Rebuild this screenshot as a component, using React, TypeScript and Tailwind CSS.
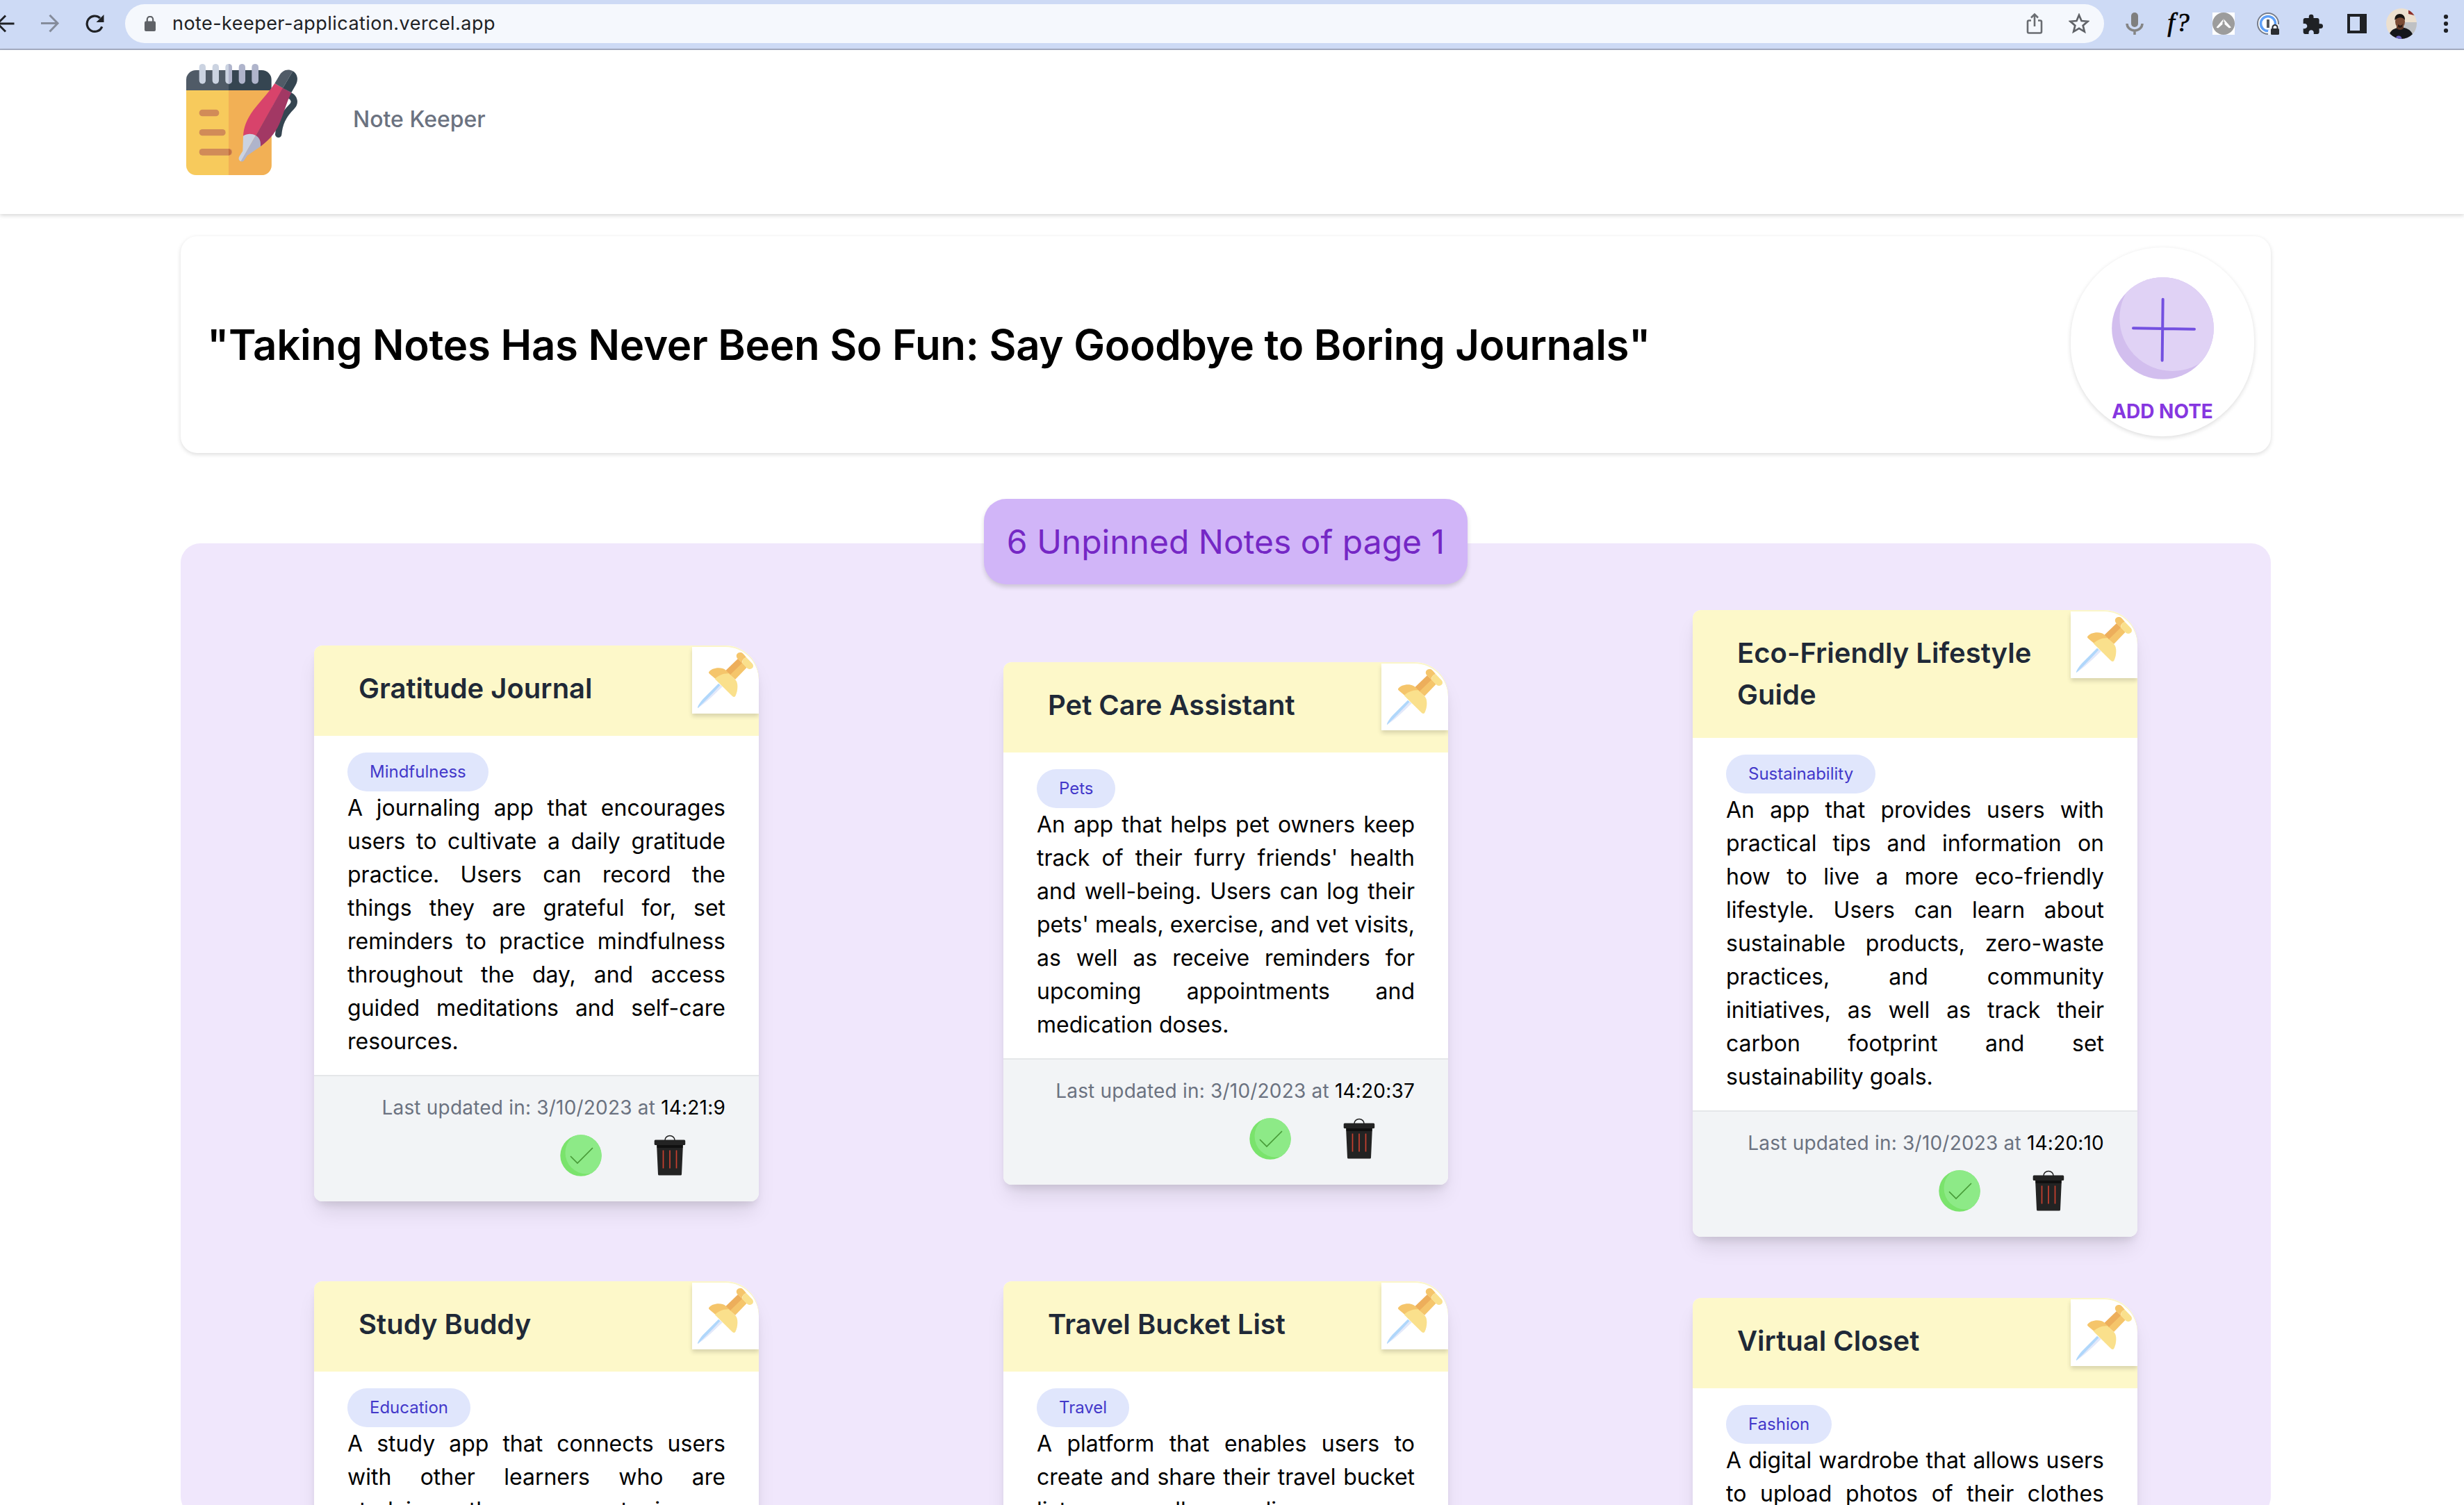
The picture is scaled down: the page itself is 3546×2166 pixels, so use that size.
import React from "react";

type Note = {
  title: string;
  tag: string;
  text: string;
  time: string;
};

const notes: Note[] = [
  {
    title: "Gratitude Journal",
    tag: "Mindfulness",
    text: "A journaling app that encourages users to cultivate a daily gratitude practice. Users can record the things they are grateful for, set reminders to practice mindfulness throughout the day, and access guided meditations and self-care resources.",
    time: "14:21:9",
  },
  {
    title: "Pet Care Assistant",
    tag: "Pets",
    text: "An app that helps pet owners keep track of their furry friends' health and well-being. Users can log their pets' meals, exercise, and vet visits, as well as receive reminders for upcoming appointments and medication doses.",
    time: "14:20:37",
  },
  {
    title: "Eco-Friendly Lifestyle Guide",
    tag: "Sustainability",
    text: "An app that provides users with practical tips and information on how to live a more eco-friendly lifestyle. Users can learn about sustainable products, zero-waste practices, and community initiatives, as well as track their carbon footprint and set sustainability goals.",
    time: "14:20:10",
  },
  {
    title: "Study Buddy",
    tag: "Education",
    text: "A study app that connects users with other learners who are studying the same topic or coursework. Users can create study groups, share notes and resources, and schedule study sessions together. The app also helps learners keep track of exams.",
    time: "14:19:42",
  },
  {
    title: "Travel Bucket List",
    tag: "Travel",
    text: "A platform that enables users to create and share their travel bucket list, as well as discover new destinations and activities. Users can plan trips together, save places to visit, and share photos and tips from their journeys with other travelers.",
    time: "14:19:15",
  },
  {
    title: "Virtual Closet",
    tag: "Fashion",
    text: "A digital wardrobe that allows users to upload photos of their clothes and create outfits. Users can plan what to wear, receive suggestions based on weather and occasion, and share looks with their friends and family.",
    time: "14:18:50",
  },
];

function ToolButton({ children }: { children: React.ReactNode }) {
  return <div className="flex h-[68px] w-16 shrink-0 items-center justify-center">{children}</div>;
}

function BrowserBar() {
  return (
    <div className="flex h-[72px] items-start overflow-hidden border-b-2 border-[#a7afc4] bg-[#cddaf5]">
      <div className="-ml-6 flex shrink-0">
        <ToolButton>
          <svg width="28" height="28" viewBox="0 0 28 28" fill="none" stroke="#1f2125" strokeWidth="3">
            <path d="M26.5 14H3M14 2.5L2.5 14L14 25.5" />
          </svg>
        </ToolButton>
        <ToolButton>
          <svg width="28" height="28" viewBox="0 0 28 28" fill="none" stroke="#858c9b" strokeWidth="3">
            <path d="M1 13.500H25M13.500 1.800L25 13.500L13.500 25.500" />
          </svg>
        </ToolButton>
        <ToolButton>
          <svg width="28" height="28" viewBox="0 0 28 28">
            <path d="M24.800 18.300A11.200 11.200 0 1 1 22 6" fill="none" stroke="#1f2125" strokeWidth="3.200" />
            <path d="M27.500 1V12H16.500Z" fill="#1f2125" />
          </svg>
        </ToolButton>
      </div>
      <div className="mt-1.5 ml-3 flex h-14 w-[2848px] shrink-0 items-center rounded-full bg-[#f5f8fd] pr-5 pl-7">
        <svg width="16" height="22" viewBox="0 0 16 22" className="shrink-0">
          <path d="M3.800 9V5A4.200 4.200 0 0 1 12.200 5V9" fill="none" stroke="#5f6267" strokeWidth="2.200" />
          <rect y="7.500" width="16" height="14.500" rx="2" fill="#5f6267" />
        </svg>
        <span className="ml-6 text-[27px] tracking-[0.45px] text-[#202124]">note-keeper-application.vercel.app</span>
        <div className="ml-auto flex items-center">
          <svg width="24" height="32" viewBox="0 0 24 32" fill="none" stroke="#6a6d72" strokeWidth="2.600">
            <path d="M7 11.500H4A2 2 0 0 0 2 13.500V27.500A2 2 0 0 0 4 29.500H20A2 2 0 0 0 22 27.500V13.500A2 2 0 0 0 20 11.500H17" />
            <path d="M12 20V3M7 7.500L12 2.500L17 7.500" />
          </svg>
          <svg width="30" height="30" viewBox="1 1 28 28" className="mr-px ml-[37px]" fill="none" stroke="#5f6267" strokeWidth="2.500">
            <path d="M15 3.500L18.300 11.300L26.700 12L20.300 17.500L22.300 25.800L15 21.400L7.700 25.800L9.700 17.500L3.300 12L11.700 11.300Z" />
          </svg>
        </div>
      </div>
      <div className="ml-3 flex shrink-0">
        <ToolButton>
          <svg width="26" height="32" viewBox="0 0 26 32">
            <rect x="8" y="0" width="10" height="21" rx="5" fill="#7f7f7f" />
            <path d="M2 16A11 10 0 0 0 24 16M13 26V32" fill="none" stroke="#858585" strokeWidth="3.500" />
          </svg>
        </ToolButton>
        <ToolButton>
          <span className="-mt-1 font-['Liberation_Serif'] text-[38px] leading-none tracking-[2px] text-black italic [-webkit-text-stroke:0.7px_black]">f?</span>
        </ToolButton>
        <ToolButton>
          <div className="size-8 bg-white">
            <svg width="32" height="32" viewBox="0 0 32 32">
              <circle cx="16" cy="16" r="16" fill="#9c9c9c" />
              <path d="M16 9L27 21.500L24 22.500L17.500 17V13.500H14.500V17L8 22.500L5.500 21.500Z" fill="#fff" />
              <path d="M16 9V17.500" stroke="#9c9c9c" strokeWidth="1.200" />
            </svg>
          </div>
        </ToolButton>
        <ToolButton>
          <svg width="32" height="32" viewBox="0 0 32 32">
            <circle cx="16" cy="16" r="15" fill="#fff" stroke="#767c89" strokeWidth="2" />
            <circle cx="16" cy="16" r="10.500" fill="none" stroke="#5fa0f7" strokeWidth="3.600" />
            <rect x="14" y="10" width="4" height="12" fill="#55585d" />
            <path d="M16 32V26L22 17H32V32Z" fill="#edf2fc" />
            <path d="M22.500 24V21.500A3.500 3.500 0 0 1 29.500 21.500V24" fill="none" stroke="#2b2d31" strokeWidth="2" />
            <rect x="20" y="23" width="12" height="9" rx="1.500" fill="#2b2d31" />
          </svg>
        </ToolButton>
        <ToolButton>
          <svg width="29" height="29" viewBox="1.500 0.500 21.500 21.500" fill="#1f2125">
            <path d="M20.500 11H19V7c0-1.100-.9-2-2-2h-4V3.500a2.500 2.500 0 0 0-5 0V5H4c-1.100 0-2 .9-2 2v3.800h1.500c1.500 0 2.700 1.200 2.700 2.700S5 16.200 3.500 16.200H2V20c0 1.100.9 2 2 2h3.800v-1.500c0-1.500 1.200-2.700 2.700-2.700s2.700 1.200 2.700 2.700V22H17c1.100 0 2-.9 2-2v-4h1.500a2.500 2.500 0 0 0 0-5z" />
          </svg>
        </ToolButton>
        <ToolButton>
          <div className="h-7 w-7 border-4 border-r-[10px] border-[#1f2125]" />
        </ToolButton>
        <ToolButton>
          <svg width="44" height="44" viewBox="0 0 44 44" className="rounded-full">
            <rect width="44" height="44" fill="#ece0cf" />
            <path d="M24 20H44V44H24Z" fill="#bfc1c4" />
            <path d="M32 2H44V11L32 8Z" fill="#8d2f2a" />
            <path d="M3 44C4 33 10 29 17 28L26 28C34 30 38 34 40 44Z" fill="#15171b" />
            <path d="M15 23H25V29Q20 33 15 29Z" fill="#5b3524" />
            <ellipse cx="20" cy="19" rx="7" ry="9.500" fill="#7a4a33" />
            <path d="M12.500 17C11 5 28 5 27 17C24 12 17 12 12.500 17Z" fill="#17130f" />
            <path d="M17 23Q21 27 24 22L23 27Q20 29 17 27Z" fill="#2a1a14" />
            <circle cx="18" cy="44" r="4.500" fill="#6e66c9" />
          </svg>
        </ToolButton>
        <ToolButton>
          <svg width="8" height="28" viewBox="0 0 8 28" fill="#1f2125">
            <circle cx="4" cy="4" r="3.100" />
            <circle cx="4" cy="14" r="3.100" />
            <circle cx="4" cy="24" r="3.100" />
          </svg>
        </ToolButton>
      </div>
    </div>
  );
}

function Logo() {
  return (
    <svg width="160" height="160" viewBox="54 66 480 480">
      <path d="M54 178H422V504A42 42 0 0 1 380 546H96A42 42 0 0 1 54 504Z" fill="#f7ca5c" />
      <path d="M237 178H422V504A42 42 0 0 1 380 546H237Z" fill="#f2b055" />
      <path d="M54 180V135A42 42 0 0 1 96 93H237V180Z" fill="#505b67" />
      <path d="M237 93H380A42 42 0 0 1 422 135V180H237Z" fill="#354551" />
      <rect x="110" y="66" width="28" height="86" rx="14" fill="#cbd3e1" />
      <rect x="167" y="66" width="28" height="86" rx="14" fill="#cbd3e1" />
      <rect x="223" y="66" width="29" height="86" rx="14" fill="#cbd3e1" />
      <path d="M237 66A15 15 0 0 1 252 80V138A15 15 0 0 1 237 152Z" fill="#afb4cb" />
      <rect x="281" y="66" width="28" height="86" rx="14" fill="#afb4cb" />
      <rect x="337" y="66" width="29" height="86" rx="14" fill="#afb4cb" />
      <rect x="110" y="263" width="86" height="29" rx="14" fill="#d18b58" />
      <rect x="110" y="348" width="114" height="28" rx="14" fill="#d18b58" />
      <rect x="110" y="432" width="142" height="29" rx="14" fill="#d18b58" />
      <path d="M237 432A15 15 0 0 1 237 461Z" fill="#c56f40" />
      <path d="M500 202C522 212 526 234 510 250C470 290 456 325 452 370" fill="none" stroke="#354551" strokeWidth="28" strokeLinecap="round" />
      <path d="M436 150L472 170L354 376L300 380C301 340 315 305 345 264C380 220 410 190 436 150Z" fill="#d8436b" />
      <path d="M471 169L508 190C490 225 480 265 462 310C445 355 420 390 375 422L354 376Z" fill="#a23864" />
      <path d="M436 150L456 116C468 94 492 84 514 97L471 170Z" fill="#505b67" />
      <path d="M514 97C535 110 539 134 527 156L508 190L471 170Z" fill="#354551" />
      <path d="M300 377C318 366 337 366 354 375L290 487C281 482 278 474 284 464L298 442Z" fill="#cbd3e1" />
      <path d="M354 375C371 384 377 402 375 422L317 462L305 481C302 487 296 489 290 487Z" fill="#afb4cb" />
    </svg>
  );
}

function PlusDisc() {
  return (
    <svg width="147" height="147" viewBox="298 207 441 441">
      <clipPath id="plus-disc">
        <circle cx="518.500" cy="427.500" r="220" />
      </clipPath>
      <circle cx="518.500" cy="427.500" r="220" fill="#d2beee" />
      <circle cx="560" cy="384" r="228" fill="#e0d2f5" clipPath="url(#plus-disc)" />
      <path d="M519 302L516 566M391 427L655 431" stroke="#7350e0" strokeWidth="12" strokeLinecap="round" />
    </svg>
  );
}

function Pin() {
  return (
    <svg width="96" height="96" viewBox="48 63 288 288" className="block">
      <path d="M162 221L171 229C140 262 110 297 73 327C68 327 80 304 96 287Z" fill="#b0d7fb" />
      <path d="M171 227L179 235C150 262 118 296 74 327C100 302 135 265 171 227Z" fill="#e2e8fa" />
      <path d="M246 114L266 134L214 186L193 165Z" fill="#edae5b" />
      <path d="M265 132L284 152L234 204L212 184Z" fill="#f5c56b" />
      <path d="M120 172C132 153 175 147 194 164L210 180L148 200L123 179Q119 176 120 172Z" fill="#f5c56b" />
      <path d="M146 201C160 187 184 176 207 178L236 206C247 217 247 250 235 275Q230 283 222 276Z" fill="#fae08c" />
      <path d="M244 113C232 98 246 82 262 88Q266 89 282 108Q262 116 264 133Z" fill="#f5c56b" />
      <path d="M282 108L308 135C320 150 302 166 287 156L264 133Q264 114 282 108Z" fill="#fae08c" />
    </svg>
  );
}

function CheckIcon() {
  return (
    <svg width="60" height="60" viewBox="0 0 60 60">
      <clipPath id="check-disc">
        <circle cx="30" cy="30" r="29.700" />
      </clipPath>
      <circle cx="30" cy="30" r="29.700" fill="#7ae36c" />
      <circle cx="38" cy="26" r="30.500" fill="#8dea87" clipPath="url(#check-disc)" />
      <path d="M15.500 31.500L25 41L46.500 19.500" fill="none" stroke="#479a37" strokeWidth="1.700" strokeLinecap="round" />
    </svg>
  );
}

function TrashIcon() {
  return (
    <svg width="46" height="60" viewBox="0 0 46 60">
      <path d="M16 8A7 6.500 0 0 1 30 8" fill="none" stroke="#222" strokeWidth="1.500" />
      <path d="M4 13H42L40 57Q40 58.500 38.500 58.500H7.500Q6 58.500 6 57Z" fill="#232323" />
      <path d="M4.500 13H41.500V19H4.700Z" fill="#101010" />
      <rect x="0.700" y="7.500" width="44.500" height="7.500" rx="1.500" fill="#232323" />
      <path d="M13.500 22.500V48.500M23 22.500V48.500M32.500 22.500V48.500" stroke="#c8402f" strokeWidth="1.700" />
    </svg>
  );
}

function NoteCard({ note }: { note: Note }) {
  return (
    <article className="w-[640px] overflow-hidden rounded-xl rounded-tr-[48px] bg-white shadow-[0_20px_30px_-6px_rgba(0,0,0,0.1),0_8px_12px_-4px_rgba(0,0,0,0.1)]">
      <header className="relative min-h-[130px] bg-[#fdf8c9] py-8 pr-28 pl-16">
        <h2 className="text-[40px] leading-[60px] font-semibold text-[#1f2937]">{note.title}</h2>
        <div className="absolute top-0.5 right-0 rounded-tr-[48px] bg-white shadow-[0_4px_6px_rgba(0,0,0,0.15)]">
          <Pin />
        </div>
      </header>
      <div className="px-12 py-6">
        <div className="flex">
          <span className="flex h-14 items-center rounded-full bg-[#e0e6fc] px-8 text-2xl text-[#4338ca]">{note.tag}</span>
        </div>
        <p className="text-justify text-[32px] leading-[48px] text-black">{note.text}</p>
      </div>
      <footer className="h-[182px] border-t-2 border-[#e5e7e9] bg-[#f2f4f6] px-12 pt-6">
        <p className="text-right text-[28px] leading-[42px] tracking-[0.2px] text-[#6b7280]">
          Last updated in: 3/10/2023 at <span className="text-black">{note.time}</span>
        </p>
        <div className="mt-[18px] flex items-center justify-end gap-[75px] pr-[57px]">
          <CheckIcon />
          <TrashIcon />
        </div>
      </footer>
    </article>
  );
}

export default function App() {
  return (
    <div className="h-[2166px] w-[3546px] overflow-hidden bg-white font-['Inter',sans-serif]">
      <BrowserBar />
      <nav className="flex h-[236px] items-start pt-5 pl-[268px] shadow-[0_2px_6px_rgba(0,0,0,0.17)]">
        <Logo />
        <span className="mt-14 ml-20 text-[32px] leading-[48px] font-medium text-[#6b7280]">Note Keeper</span>
      </nav>
      <main className="ml-[260px] flex w-[3008px] flex-col">
        <section className="mt-8 flex h-[312px] items-center justify-between rounded-3xl pr-6 pl-[38px] shadow-[0_2px_6px_rgba(0,0,0,0.14)]">
          <h1 className="text-[60px] leading-[72px] font-semibold tracking-[-0.29px] text-black">
            "Taking Notes Has Never Been So Fun: Say Goodbye to Boring Journals"
          </h1>
          <button className="-mt-2 flex h-[272px] w-[264px] flex-col items-center rounded-full pt-[43px] shadow-[0_2px_6px_rgba(0,0,0,0.14)]">
            <PlusDisc />
            <span className="mt-[26px] text-[28px] leading-10 font-bold text-[#8637e0]">ADD NOTE</span>
          </button>
        </section>
        <section className="mt-[130px] flex h-[1400px] shrink-0 flex-col rounded-[28px] bg-[#f0e7fc] px-4">
          <div className="-mt-16 flex h-[123px] w-[696px] shrink-0 items-center justify-center self-center rounded-[32px] bg-[#d1b5f8] text-[48px] text-[#7527c5] shadow-[0_4px_6px_rgba(0,0,0,0.15)]">
            6 Unpinned Notes of page 1
          </div>
          <div className="mt-[37px] grid grid-cols-3 items-center justify-items-center gap-y-16">
            {notes.map((note) => (
              <NoteCard key={note.title} note={note} />
            ))}
          </div>
        </section>
      </main>
    </div>
  );
}
